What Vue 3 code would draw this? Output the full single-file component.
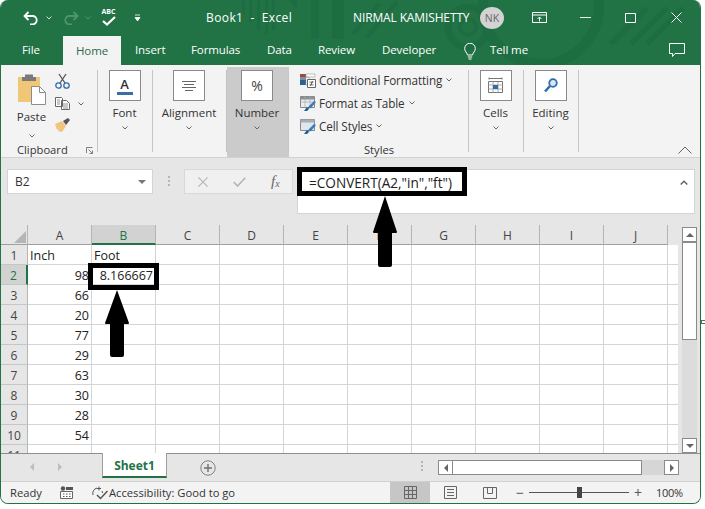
<script setup>
const cols = ['A', 'B', 'C', 'D', 'E', 'F', 'G', 'H', 'I', 'J']
const values = ['', '98', '66', '20', '77', '29', '63', '30', '28', '54', '']
const rows = values.map((v, i) => ({ n: i + 1, v }))
</script>

<template>
  <div class="stage">
    <div class="window">
      <svg class="pattern" width="700" height="65" viewBox="0 0 700 65">
        <g fill="#1e6c41">
          <rect x="241" y="0" width="3" height="14" />
          <rect x="248" y="0" width="3" height="22" />
          <rect x="256" y="0" width="3" height="30" />
          <rect x="264" y="0" width="3" height="34" />
          <rect x="271" y="0" width="3" height="30" />
          <rect x="310" y="0" width="8" height="38" />
          <rect x="331" y="0" width="12" height="39" />
          <path d="M288 0h8v10z" />
        </g>
        <g fill="none" stroke="#1e6c41">
          <circle cx="467" cy="27" r="20" stroke-width="7" />
          <circle cx="467" cy="27" r="8" stroke-width="4" />
          <circle cx="540" cy="6" r="58" stroke-width="10" />
          <path d="M630 44 666 8M646 44 682 8M610 44 646 8" stroke-width="5" />
          <path d="M352 34 378 4M366 37 396 2" stroke-width="4" />
        </g>
      </svg>

      <header class="titlebar">
        <div class="qat">
          <svg class="i-undo" width="16" height="14" viewBox="0 0 16 14"><path d="M5.500 1 1.500 5l4 4M2 5h7.500a4.200 4.200 0 0 1 0 8.400H7" fill="none" stroke="#fff" stroke-width="1.800" /></svg>
          <svg class="chev-w" width="6" height="4" viewBox="0 0 6 4"><path d="M.5.500 3 3 5.500.500" fill="none" stroke="#d3e3da" /></svg>
          <svg class="i-redo" width="16" height="14" viewBox="0 0 16 14"><path d="M10.500 1l4 4-4 4M14 5H6.500a4.200 4.200 0 0 0 0 8.400H9" fill="none" stroke="#4e9470" stroke-width="1.800" /></svg>
          <svg class="chev-d" width="6" height="4" viewBox="0 0 6 4"><path d="M.5.500 3 3 5.500.500" fill="none" stroke="#4e9470" /></svg>
          <div class="abc"><span>ABC</span><svg width="14" height="10" viewBox="0 0 14 10"><path d="M1 5 5 8.500 13 1" fill="none" stroke="#fff" stroke-width="2.200" /></svg></div>
          <svg class="i-cust" width="7" height="8" viewBox="0 0 7 8"><path d="M1 1h5M1 3.500h5L3.500 7z" fill="#fff" stroke="#fff" stroke-width=".8" /></svg>
        </div>
        <span class="doc">Book1 &nbsp;-&nbsp; Excel</span>
        <span class="user">NIRMAL KAMISHETTY</span>
        <span class="avatar">NK</span>
        <svg class="i-display" width="15" height="11" viewBox="0 0 15 11"><path d="M.5.500h14v10H.5zM.5 3h14M7.500 9.500V5M5.500 7l2-2 2 2" fill="none" stroke="#fff" /></svg>
        <svg class="i-min" width="11" height="1" viewBox="0 0 11 1"><path d="M0 .5h11" stroke="#e8f0eb" /></svg>
        <svg class="i-max" width="11" height="10" viewBox="0 0 11 10"><path d="M.5.500h10v9H.5z" fill="none" stroke="#fff" /></svg>
        <svg class="i-close" width="11" height="11" viewBox="0 0 11 11"><path d="M.5.500l10 10M10.500.500l-10 10" stroke="#fff" /></svg>
      </header>

      <nav class="tabs">
        <span class="tab file">File</span>
        <span class="tab home">Home</span>
        <span class="tab insert">Insert</span>
        <span class="tab formulas">Formulas</span>
        <span class="tab data">Data</span>
        <span class="tab review">Review</span>
        <span class="tab developer">Developer</span>
        <svg class="i-bulb" width="12" height="17" viewBox="0 0 12 17"><path d="M3.500 12C3 9.500.7 8.500.7 5.500a5.300 5.300 0 0 1 10.600 0C11.300 8.500 9 9.500 8.500 12zM3.800 14h4.400M4.500 16h3" fill="none" stroke="#fff" /></svg>
        <span class="tab tell">Tell me</span>
        <svg class="i-comment" width="16" height="14" viewBox="0 0 16 14"><path d="M.5.500h15v10H6L3.500 13.500v-3h-3z" fill="none" stroke="#fff" /></svg>
      </nav>

      <section class="ribbon">
        <div class="group clipboard">
          <div class="clip-main">
            <div class="paste">
              <svg width="30" height="32" viewBox="0 0 30 32">
                <path d="M1 4h22v25H1z" fill="#f0c777" />
                <path d="M8 1.500h8V4h3v4H5V4h3z" fill="#7a7a7a" />
                <path d="M14.500 13.500h8l6 6v12h-14z" fill="#fff" stroke="#8c8c8c" />
                <path d="M22.500 13.500v6h6" fill="none" stroke="#8c8c8c" />
              </svg>
              <span class="lbl paste-lbl">Paste</span>
              <svg class="chev" width="6" height="4" viewBox="0 0 6 4"><path d="M.5.500 3 3 5.500.500" fill="none" stroke="#666" /></svg>
            </div>
            <div class="clip-small">
              <svg width="15" height="16" viewBox="0 0 15 16"><path d="M4 1l6 9M11 1l-6 9" stroke="#555" stroke-width="1.300" /><circle cx="3.500" cy="12.500" r="2.700" fill="none" stroke="#2f6ea8" stroke-width="1.300" /><circle cx="11.500" cy="12.500" r="2.700" fill="none" stroke="#2f6ea8" stroke-width="1.300" /></svg>
              <div class="copy-row">
                <svg width="15" height="13" viewBox="0 0 15 13"><path d="M.5.500h6l1 1v8h-7zM6.500 3.500h5l3 3v6h-8z" fill="#fff" stroke="#666" /><path d="M2 3h3M2 5h3M2 7h3M8 7h5M8 9h5M8 11h5" stroke="#777" stroke-width=".8" /></svg>
                <svg class="chev copy-chev" width="6" height="4" viewBox="0 0 6 4"><path d="M.5.500 3 3 5.500.500" fill="none" stroke="#666" /></svg>
              </div>
              <svg width="15" height="14" viewBox="0 0 15 14"><path d="M0 6l7-3 4 5-4 6-4-1 1-2-2 1z" fill="#efc580" /><path d="M8 3l5-3 2 2-4 5z" fill="#555" /></svg>
            </div>
          </div>
          <div class="group-foot">
            <span class="group-name">Clipboard</span>
            <svg class="launcher" width="7" height="7" viewBox="0 0 7 7"><path d="M.5 6V.500H6.500M2.500 2.500l4 4M6.500 3.500v3h-3" fill="none" stroke="#666" stroke-width=".8" /></svg>
          </div>
        </div>

        <div class="group collapsed font">
          <div class="box"><span class="a">A</span><i class="a-bar"></i></div>
          <span class="lbl">Font</span>
          <svg class="chev" width="6" height="4" viewBox="0 0 6 4"><path d="M.5.500 3 3 5.500.500" fill="none" stroke="#666" /></svg>
        </div>

        <div class="group collapsed alignment">
          <div class="box"><svg width="14" height="10" viewBox="0 0 14 10"><path d="M0 .5h14M2 3.500h10M0 6.500h14M3 9.500h8" stroke="#666" /></svg></div>
          <span class="lbl">Alignment</span>
          <svg class="chev" width="6" height="4" viewBox="0 0 6 4"><path d="M.5.500 3 3 5.500.500" fill="none" stroke="#666" /></svg>
        </div>

        <div class="group collapsed number">
          <div class="box"><span class="pct">%</span></div>
          <span class="lbl">Number</span>
          <svg class="chev" width="6" height="4" viewBox="0 0 6 4"><path d="M.5.500 3 3 5.500.500" fill="none" stroke="#666" /></svg>
        </div>

        <div class="group styles">
          <div class="style-list">
            <div class="style-row">
              <svg width="16" height="15" viewBox="0 0 16 15"><path d="M0 1h6v3H0z" fill="#9c4a3a" /><path d="M0 4h6v3H0z" fill="#7a8ea8" /><path d="M0 7h6v5H0z" fill="#2f5f8f" /><path d="M6 1h9v3H6zM6 4h3v8H6z" fill="#fff" stroke="#999" stroke-width=".6" /><path d="M7.500 6.500h8v8h-8z" fill="#fff" stroke="#666" /><path d="M9.500 9.200h4M9.500 11.800h4M12.500 8l-2 5" stroke="#444" stroke-width=".8" /></svg>
              <span>Conditional Formatting</span>
              <svg class="chev" width="6" height="4" viewBox="0 0 6 4"><path d="M.5.500 3 3 5.500.500" fill="none" stroke="#666" /></svg>
            </div>
            <div class="style-row">
              <svg width="16" height="15" viewBox="0 0 16 15"><path d="M.5.500h14v11H.5z" fill="#e9edf2" stroke="#888" /><path d="M.5.500h14v3H.5z" fill="#8a8f96" /><path d="M5 .5v11M10 .5v11M.5 6h14" stroke="#aaa" stroke-width=".7" /><path d="M7 13l2-3 5-5 2 1-5 6z" fill="#3c7ab5" /><path d="M4 15l3-4 2 2-2 2z" fill="#1f5c92" /></svg>
              <span>Format as Table</span>
              <svg class="chev" width="6" height="4" viewBox="0 0 6 4"><path d="M.5.500 3 3 5.500.500" fill="none" stroke="#666" /></svg>
            </div>
            <div class="style-row">
              <svg width="16" height="15" viewBox="0 0 16 15"><path d="M.5.500h14v11H.5z" fill="#dfe6ee" stroke="#888" /><path d="M.5.500h14v3H.5z" fill="#a9adb3" /><path d="M7 13l2-3 5-5 2 1-5 6z" fill="#3c7ab5" /><path d="M4 15l3-4 2 2-2 2z" fill="#1f5c92" /></svg>
              <span>Cell Styles</span>
              <svg class="chev" width="6" height="4" viewBox="0 0 6 4"><path d="M.5.500 3 3 5.500.500" fill="none" stroke="#666" /></svg>
            </div>
          </div>
          <span class="group-name centered">Styles</span>
        </div>

        <div class="group collapsed cells">
          <div class="box"><svg width="15" height="17" viewBox="0 0 15 17"><path d="M1 1.500h13M1 .5v2M14 .5v2" stroke="#555" stroke-width=".8" /><path d="M.5 4.500h14v11H.5z" fill="#fff" stroke="#777" /><path d="M.5 8h14M.5 12h14M5 4.500v11M10 4.500v11" stroke="#999" stroke-width=".8" /><path d="M5 8h5v4H5z" fill="#2f6ea8" /></svg></div>
          <span class="lbl">Cells</span>
          <svg class="chev" width="6" height="4" viewBox="0 0 6 4"><path d="M.5.500 3 3 5.500.500" fill="none" stroke="#666" /></svg>
        </div>

        <div class="group collapsed editing">
          <div class="box"><svg width="14" height="15" viewBox="0 0 14 15"><circle cx="9" cy="5" r="3.800" fill="#d9e6f2" stroke="#2f6ea8" stroke-width="1.800" /><path d="M6 8 1 13.500" stroke="#2f6ea8" stroke-width="2.600" /></svg></div>
          <span class="lbl">Editing</span>
          <svg class="chev" width="6" height="4" viewBox="0 0 6 4"><path d="M.5.500 3 3 5.500.500" fill="none" stroke="#666" /></svg>
        </div>

        <svg class="collapse" width="14" height="8" viewBox="0 0 14 8"><path d="M.5 7.500 7 1l6.500 6.500" fill="none" stroke="#666" /></svg>
      </section>

      <section class="formula-bar">
        <div class="namebox"><span>B2</span><svg width="8" height="4" viewBox="0 0 8 4"><path d="M0 0h8L4 4z" fill="#777" /></svg></div>
        <div class="grip"><i></i><i></i><i></i></div>
        <div class="fx-box">
          <svg width="10" height="10" viewBox="0 0 11 11"><path d="M.5.500l10 10M10.500.500l-10 10" stroke="#b4b4b4" stroke-width="1.200" /></svg>
          <svg width="13" height="10" viewBox="0 0 13 10"><path d="M.7 5 4.500 9 12.300.7" fill="none" stroke="#b4b4b4" stroke-width="1.600" /></svg>
          <span class="fx">f<sub>x</sub></span>
        </div>
        <div class="formula">
          <span>=CONVERT(A2,"in","ft")</span>
          <svg width="8" height="5" viewBox="0 0 8 5"><path d="M.7 4.500 4 1.200 7.300 4.500" fill="none" stroke="#666" stroke-width="1.500" /></svg>
        </div>
      </section>

      <section class="sheet">
        <div class="table">
          <div class="row head-row">
            <div class="corner"><svg width="12" height="12" viewBox="0 0 12 12"><path d="M12 0v12H0z" fill="#b5b5b5" /></svg></div>
            <div v-for="c in cols" :key="c" class="col-head" :class="{ on: c === 'B' }">{{ c }}</div>
          </div>
          <div class="body">
            <div v-for="r in rows" :key="r.n" class="row">
              <div class="row-head" :class="{ on: r.n === 2 }">{{ r.n }}</div>
              <div class="cell" :class="r.n === 1 ? 'left' : 'right'">{{ r.n === 1 ? 'Inch' : r.v }}</div>
              <div class="cell" :class="r.n === 1 ? 'left' : 'right'">{{ r.n === 1 ? 'Foot' : r.n === 2 ? '8.166667' : '' }}</div>
              <div v-for="c in 8" :key="c" class="cell"></div>
              <div class="cell last"></div>
            </div>
          </div>
        </div>
        <div class="vscroll">
          <div class="sb-btn"><svg width="8" height="4" viewBox="0 0 8 4"><path d="M0 4h8L4 0z" fill="#666" /></svg></div>
          <div class="v-thumb"></div>
          <div class="sb-fill"></div>
          <div class="sb-btn"><svg width="8" height="4" viewBox="0 0 8 4"><path d="M0 0h8L4 4z" fill="#666" /></svg></div>
        </div>
      </section>

      <section class="tabbar">
        <div class="nav-arrows">
          <svg width="4" height="8" viewBox="0 0 4 8"><path d="M4 0v8L0 4z" fill="#bdbdbd" /></svg>
          <svg width="4" height="8" viewBox="0 0 4 8"><path d="M0 0v8l4-4z" fill="#bdbdbd" /></svg>
        </div>
        <div class="sheet-tab">Sheet1</div>
        <svg class="plus" width="16" height="16" viewBox="0 0 16 16"><circle cx="8" cy="8" r="7.200" fill="none" stroke="#808080" /><path d="M4 8h8M8 4v8" stroke="#707070" stroke-width="1.400" /></svg>
        <div class="grip tab-grip"><i></i><i></i><i></i></div>
        <div class="hscroll">
          <div class="sb-btn"><svg width="4" height="8" viewBox="0 0 4 8"><path d="M4 0v8L0 4z" fill="#666" /></svg></div>
          <div class="h-thumb"></div>
          <div class="h-fill"></div>
          <div class="sb-btn"><svg width="4" height="8" viewBox="0 0 4 8"><path d="M0 0v8l4-4z" fill="#666" /></svg></div>
        </div>
      </section>

      <footer class="status">
        <span class="ready">Ready</span>
        <svg class="i-macro" width="13" height="13" viewBox="0 0 13 13"><circle cx="3" cy="2.500" r="2.200" fill="#555" /><path d="M6 1h7v3H6z" fill="#555" /><path d="M.5 5.500h12v7H.5z" fill="#fff" stroke="#666" /><path d="M3 8h1.500M6 8h1.500M9 8h1.500M3 10.500h1.500M6 10.500h1.500M9 10.500h1.500" stroke="#555" /></svg>
        <svg class="i-acc" width="17" height="14" viewBox="0 0 17 14"><path d="M2 9A5.500 5.500 0 0 1 6 2M8 .5v4M6 2.500h4M11 5a4 4 0 0 1 .5 2" fill="none" stroke="#555" /><path d="M6 9l3.500 3.500L16.500 5" fill="none" stroke="#555" stroke-width="1.500" /></svg>
        <span class="acc">Accessibility: Good to go</span>
        <div class="view on"><svg width="13" height="13" viewBox="0 0 13 13"><path d="M.5.500h12v12H.5zM4.500.500v12M8.500.500v12M.5 4.500h12M.5 8.500h12" fill="none" stroke="#666" /></svg></div>
        <div class="view"><svg width="13" height="13" viewBox="0 0 13 13"><path d="M.5.500h12v12H.5z" fill="none" stroke="#666" /><path d="M3 3.500h7M3 6.500h7M3 9.500h7" stroke="#666" /></svg></div>
        <div class="view"><svg width="14" height="12" viewBox="0 0 14 12"><path d="M.5.500h13v11H.5zM4.500.500v6h5v-6" fill="none" stroke="#666" /></svg></div>
        <div class="zoom">
          <span class="zm">−</span>
          <div class="track"><i class="knob"></i></div>
          <span class="zm">+</span>
          <span class="pc">100%</span>
        </div>
      </footer>

      <div class="mark mark-formula"></div>
      <div class="mark mark-cell"></div>
      <svg class="arrow arrow-cell" width="26" height="68" viewBox="0 0 26 68"><path d="M13 0 25 33q0 1-1 1h-4v31q0 2-2 2H8q-2 0-2-2V34H2q-1 0-1-1z" fill="#000" /></svg>
      <svg class="arrow arrow-formula" width="26" height="72" viewBox="0 0 26 72"><path d="M13 0 25 36q0 1-1 1h-4v32q0 2-2 2H8q-2 0-2-2V37H2q-1 0-1-1z" fill="#000" /></svg>
    </div>
    <i class="edge-tick"></i>
  </div>
</template>

<style>
html, body { margin: 0; background: #fff; }
</style>

<style scoped>
.stage { position: relative; width: 705px; height: 509px; overflow: hidden; }
.edge-tick { position: absolute; left: 701px; top: 320px; width: 4px; height: 4px; border: 1px solid #55705f; border-right: 0; display: block; box-sizing: border-box; }
.window {
  position: relative;
  box-sizing: border-box;
  width: 701px;
  height: 504px;
  display: flex;
  flex-direction: column;
  overflow: hidden;
  background: #e6e6e6;
  border: 1px solid #217346;
  border-top-width: 0;
  border-radius: 8px;
  font-family: "Open Sans", "Noto Sans", sans-serif;
  font-size: 12px;
  color: #333;
}
.pattern { position: absolute; left: 0; top: 0; }

.titlebar {
  position: relative;
  height: 37px;
  flex: none;
  display: flex;
  align-items: center;
  color: #fff;
}
.window::before {
  content: "";
  position: absolute;
  left: 0; top: 0; right: 0;
  height: 65px;
  background: #217346;
}
.pattern, .titlebar, .tabs, .ribbon { z-index: 1; }
.qat { display: flex; align-items: center; width: 205px; flex: none; margin-top: -2px; }
.i-undo { margin-left: 22px; }
.chev-w { margin-left: 7px; }
.i-redo { margin-left: 11px; }
.chev-d { margin-left: 6px; }
.abc { margin-left: 10px; display: flex; flex-direction: column; align-items: center; width: 15px; margin-top: -2px; }
.abc span { font-size: 7px; font-weight: 700; line-height: 8px; }
.i-cust { margin-left: 18px; }
.doc { width: 147px; flex: none; font-size: 12px; letter-spacing: .4px; margin-top: -2px; }
.user { width: 127px; flex: none; font-size: 12px; letter-spacing: -.13px; margin-top: -2px; white-space: nowrap; }
.avatar {
  width: 24px; height: 22px; border-radius: 50%;
  background: #d3d3d3; color: #666; font-size: 10.500px;
  display: flex; align-items: center; justify-content: center;
  margin: -2px 0 0 0; flex: none;
}
.i-display { margin: -2px 0 0 28px; flex: none; }
.i-min { margin: -2px 0 0 33px; flex: none; }
.i-max { margin: -2px 0 0 34px; flex: none; }
.i-close { margin: -2px 0 0 35px; flex: none; }

.tabs {
  position: relative;
  height: 28px;
  flex: none;
  display: flex;
  align-items: center;
  color: #fff;
  font-size: 11.500px;
  letter-spacing: -.1px;
}
.tab { flex: none; line-height: 26px; height: 28px; white-space: nowrap; }
.file { margin-left: 21px; width: 41px; }
.home {
  width: 58px; text-align: center; height: 29px; line-height: 29px;
  margin-top: -1px;
  background: #f3f3f3; color: #2b6b49;
}
.insert { margin-left: 14px; width: 56px; }
.formulas { width: 76px; }
.data { width: 51px; }
.review { width: 64px; }
.developer { width: 82px; }
.i-bulb { flex: none; }
.tell { margin-left: 14px; width: 179px; }
.i-comment { margin: -2px 0 0 0; flex: none; }

.ribbon {
  position: relative;
  flex: none;
  display: flex;
  background: #f3f3f3;
  border-bottom: 1px solid #d2d2d2;
  box-sizing: border-box;
  height: 93px;
}
.group {
  position: relative;
  box-sizing: border-box;
  flex: none;
  display: flex;
  flex-direction: column;
  align-items: center;
}
.group::after {
  content: "";
  position: absolute;
  right: 0; top: 5px; bottom: 5px;
  width: 1px;
  background: #c4c4c4;
}
.clipboard { width: 97px; padding: 8px 0 0 12px; align-items: stretch; }
.clip-main { display: flex; height: 72px; }
.paste { width: 35px; margin-left: 1px; display: flex; flex-direction: column; align-items: center; }
.paste-lbl { margin-top: 0; }
.paste .chev { margin-top: 8px; }
.clip-small { display: flex; flex-direction: column; gap: 8px; margin-left: 6px; }
.copy-row { display: flex; align-items: center; }
.copy-chev { margin-left: 8px; }
.group-foot { display: flex; align-items: center; justify-content: space-between; padding: 0 5px 0 4px; margin-top: 3px; }
.group-name { font-size: 11.200px; line-height: 18px; }
.font { width: 55px; }
.alignment { width: 74px; }
.number { width: 62px; background: #cbcbcb; margin-top: 2px; padding-top: 3px; }
.cells { width: 55px; }
.editing { width: 55px; }
.collapsed { padding-top: 5px; padding-right: 2px; }
.number.collapsed { padding-top: 3px; }
.box {
  box-sizing: border-box;
  width: 32px; height: 31px;
  border: 1px solid #8a8a8a;
  background: #fff;
  display: flex;
  flex-direction: column;
  align-items: center;
  justify-content: center;
  flex: none;
}
.a { font-size: 13px; line-height: 13px; font-weight: 600; margin-top: 2px; }
.a-bar { width: 16px; height: 3px; background: #3c6ea5; margin-top: 1px; display: block; }
.pct { font-size: 14px; color: #444; }
.lbl { font-size: 11.500px; line-height: 18px; margin-top: 3px; white-space: nowrap; }
.chev { display: block; flex: none; }
.collapsed .chev { margin-top: 4px; }
.styles { width: 180px; align-items: stretch; }
.style-list { padding: 6px 0 0 11px; height: 70px; box-sizing: border-box; display: flex; flex-direction: column; gap: 5px; }
.style-row { display: flex; align-items: center; height: 18px; font-size: 11.700px; letter-spacing: -.1px; white-space: nowrap; }
.style-row span { margin-left: 3px; }
.style-row .chev { margin-left: 4px; }
.centered { text-align: center; margin-top: 6px; }
.collapse { position: absolute; left: 677px; top: 81px; }

.formula-bar {
  height: 67px;
  flex: none;
  box-sizing: border-box;
  padding: 11px 5px 0 6px;
  display: flex;
  align-items: flex-start;
  background: #e6e6e6;
}
.namebox, .fx-box, .formula {
  box-sizing: border-box;
  background: #fff;
  border: 1px solid #d4d4d4;
  display: flex;
  flex: none;
}
.namebox {
  width: 146px; height: 25px;
  align-items: center; justify-content: space-between;
  padding: 0 6px 0 7px;
}
.grip { display: flex; flex-direction: column; gap: 2px; width: 2px; flex: none; }
.grip i { display: block; width: 2px; height: 2px; background: #b5b5b5; }
.formula-bar .grip { margin: 7px 0 0 15px; }
.fx-box {
  margin-left: 14px;
  width: 109px; height: 25px;
  align-items: center;
  background: #f0f0f0;
  padding-left: 13px;
  gap: 25px;
  border-color: #d8d8d8;
}
.fx { font-family: "Liberation Serif", serif; font-style: italic; font-size: 15px; color: #666; }
.fx sub { font-size: 10px; vertical-align: -1px; line-height: 0; }
.formula {
  margin-left: 4px;
  width: 398px; height: 45px;
  justify-content: space-between;
  padding: 3px 6px 0 11px;
  font-size: 13.600px;
  color: #222;
}
.formula svg { margin-top: 7px; }

.sheet {
  height: 228px;
  flex: none;
  display: flex;
  background: #e6e6e6;
  overflow: hidden;
}
.table { width: 677px; flex: none; overflow: hidden; }
.row { display: flex; height: 20px; }
.head-row { height: 20px; }
.corner { width: 27px; box-sizing: border-box; border-right: 1px solid #b5b5b5; border-bottom: 1px solid #9f9f9f; display: flex; align-items: flex-end; justify-content: flex-end; padding: 0 1px 1px 0; flex: none; }
.col-head {
  width: 64px; box-sizing: border-box; flex: none;
  border-right: 1px solid #b5b5b5;
  border-bottom: 1px solid #9f9f9f;
  text-align: center;
  line-height: 21px;
  font-size: 12px;
  color: #444;
}
.col-head.on { background: #d2d2d2; color: #217346; border-bottom: 2px solid #217346; }
.body { background: #fff; }
.row-head {
  width: 27px; box-sizing: border-box; flex: none;
  background: #e6e6e6;
  border-right: 1px solid #b5b5b5;
  border-bottom: 1px solid #c6c6c6;
  text-align: center;
  line-height: 21px;
  font-size: 12px;
  color: #444;
}
.row-head.on { background: #d2d2d2; color: #217346; border-right: 2px solid #217346; }
.cell {
  width: 64px; box-sizing: border-box; flex: none;
  border-right: 1px solid #d4d4d4;
  border-bottom: 1px solid #d4d4d4;
  line-height: 21px;
  font-size: 12.500px;
  padding: 0 2px;
  color: #222;
  overflow: hidden;
  white-space: nowrap;
}
.cell.last { width: 10px; border-right: 0; padding: 0; }
.cell.left { text-align: left; }
.cell.right { text-align: right; }

.vscroll {
  flex: none;
  width: 22px;
  box-sizing: border-box;
  padding: 2px 0 0 4px;
  display: flex;
  flex-direction: column;
  align-items: flex-start;
}
.sb-btn {
  box-sizing: border-box;
  width: 15px; height: 15px;
  flex: none;
  background: #fff;
  border: 1px solid #8a8a8a;
  display: flex;
  align-items: center;
  justify-content: center;
}
.v-thumb { box-sizing: border-box; width: 15px; height: 98px; flex: none; background: #fff; border: 1px solid #8a8a8a; }
.sb-fill { flex: 1; width: 15px; background: #dcdcdc; }

.tabbar {
  height: 28px;
  flex: none;
  display: flex;
  align-items: flex-start;
  background: #e6e6e6;
  border-top: 1px solid #8f8f8f;
  box-sizing: border-box;
}
.nav-arrows { display: flex; gap: 24px; width: 101px; box-sizing: border-box; padding: 9px 0 0 29px; flex: none; }
.sheet-tab {
  box-sizing: border-box;
  width: 65px; height: 25px;
  flex: none;
  margin-top: -1px;
  background: #fff;
  border-right: 1px solid #9f9f9f;
  border-left: 1px solid #9f9f9f;
  border-bottom: 2px solid #217346;
  color: #217346;
  font-weight: 700;
  font-size: 12px;
  text-align: center;
  line-height: 26px;
}
.plus { margin: 6px 0 0 33px; flex: none; }
.tab-grip { margin: 7px 0 0 205px; }
.hscroll { display: flex; width: 241px; margin: 6px 0 0 15px; flex: none; }
.h-thumb { box-sizing: border-box; width: 189px; height: 15px; flex: none; background: #fff; border: 1px solid #8a8a8a; border-left: 0; }
.h-fill { flex: 1; background: #d6d6d6; height: 15px; }

.status {
  flex: 1;
  display: flex;
  align-items: center;
  background: #f3f3f3;
  border-top: 1px solid #d0d0d0;
  box-sizing: border-box;
  font-size: 11.200px;
  color: #333;
}
.ready { margin-left: 9px; width: 50px; flex: none; }
.i-macro { flex: none; }
.i-acc { margin-left: 18px; flex: none; }
.acc { margin-left: 1px; width: 281px; flex: none; white-space: nowrap; }
.view { width: 40px; align-self: stretch; display: flex; align-items: center; justify-content: center; flex: none; }
.view.on { background: #c6c6c6; }
.zoom { display: flex; align-items: center; margin-left: 6px; flex: none; }
.zm { font-size: 14px; color: #555; width: 8px; text-align: center; line-height: 14px; }
.track { position: relative; width: 100px; height: 1px; background: #555; margin: 0 5px; }
.knob { position: absolute; left: 48px; top: -5px; width: 5px; height: 11px; background: #444; display: block; }
.pc { margin-left: 14px; font-size: 11px; letter-spacing: -.3px; }

.mark { position: absolute; box-sizing: border-box; border: 5px solid #000; z-index: 3; }
.mark-formula { left: 296px; top: 167px; width: 170px; height: 29px; }
.mark-cell { left: 87px; top: 263px; width: 71px; height: 27px; }
.arrow { position: absolute; z-index: 3; }
.arrow-cell { left: 103px; top: 290px; }
.arrow-formula { left: 371px; top: 196px; }
</style>
